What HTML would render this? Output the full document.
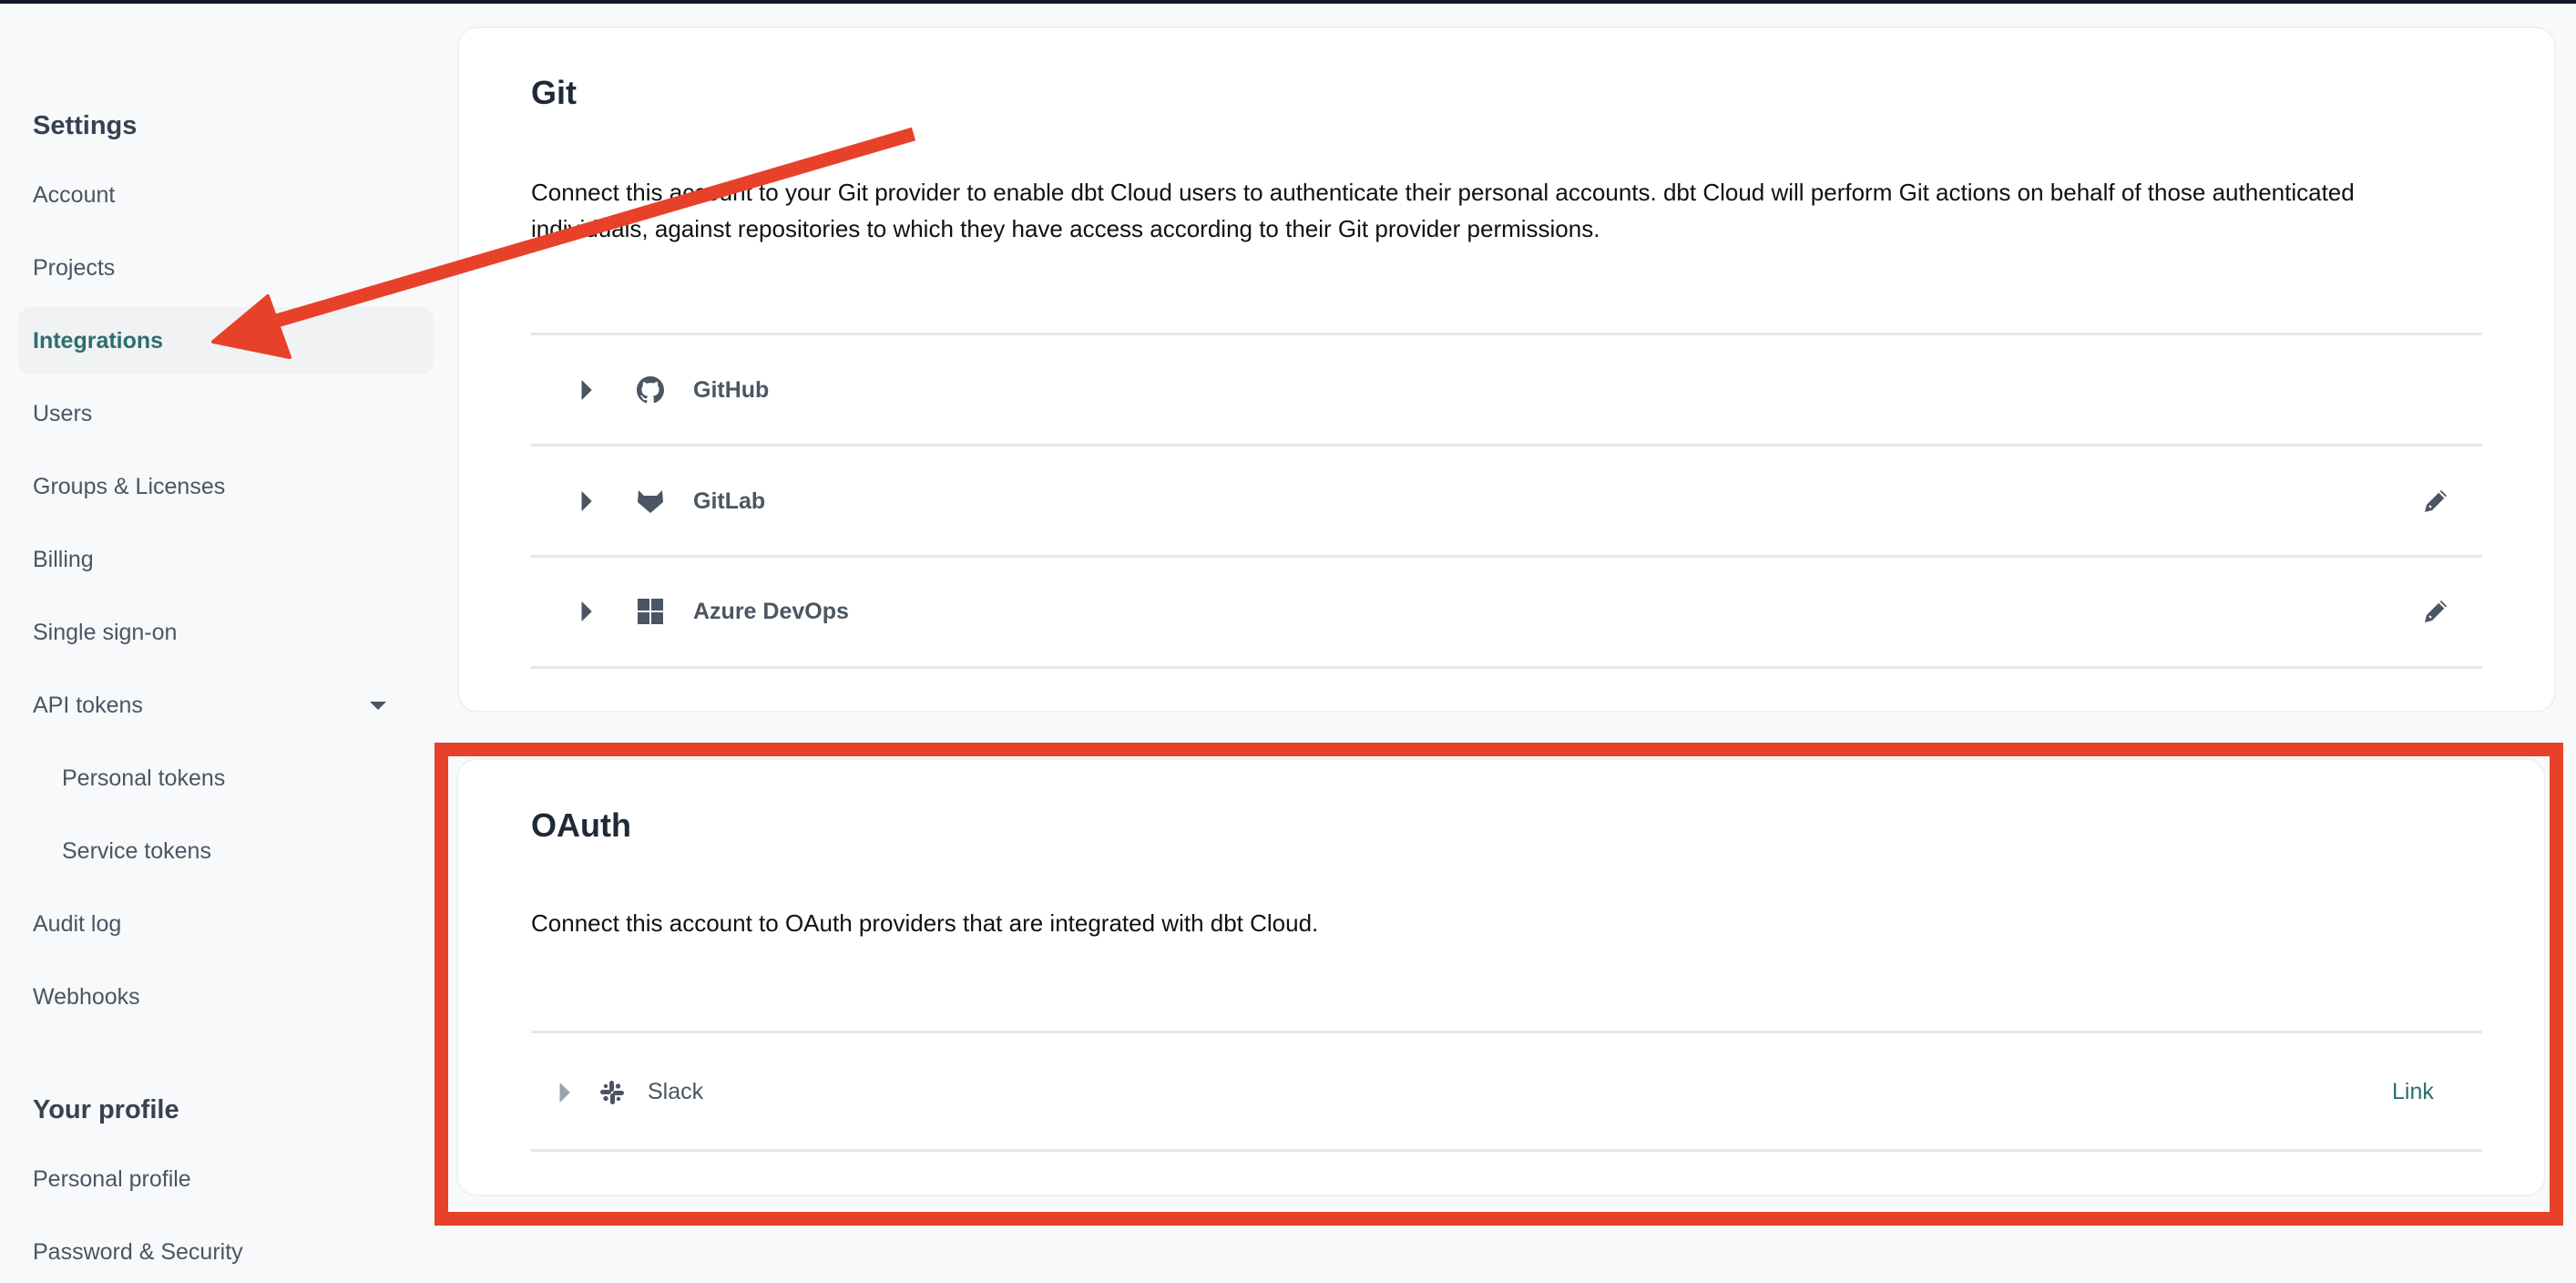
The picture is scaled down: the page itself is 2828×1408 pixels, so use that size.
<!DOCTYPE html>
<html><head><meta charset="utf-8"><style>
*{margin:0;padding:0;box-sizing:border-box}
body{width:2828px;height:1408px;background:#f8f9fb;font-family:"Liberation Sans",sans-serif;position:relative;overflow:hidden}
.t{position:absolute;white-space:nowrap;line-height:1}
.nav{left:36px;font-size:25px;color:#4b5563}
.h{font-weight:bold;color:#374151;font-size:29px}
.card{position:absolute;background:#fff;border:2px solid #eef0f3;border-radius:22px}
.div{position:absolute;left:583px;width:2142px;height:3px;background:#e6e7eb}
.lbl{font-size:25px;font-weight:bold;color:#4b5563}
</style></head><body>
<div style="position:absolute;left:0;top:0;width:2828px;height:4px;background:#111827"></div>

<div style="position:absolute;left:20px;top:337px;width:456px;height:74px;background:#f1f2f4;border-radius:14px"></div>
<div class="t h" style="left:36px;top:124px">Settings</div>
<div class="t nav" style="top:202px">Account</div>
<div class="t nav" style="top:282px">Projects</div>
<div class="t nav" style="top:362px;color:#2b6e70;font-weight:bold">Integrations</div>
<div class="t nav" style="top:442px">Users</div>
<div class="t nav" style="top:522px">Groups &amp; Licenses</div>
<div class="t nav" style="top:602px">Billing</div>
<div class="t nav" style="top:682px">Single sign-on</div>
<div class="t nav" style="top:762px">API tokens</div>
<svg style="position:absolute;left:406px;top:770px" width="18" height="10"><path d="M0 0H18L9 9Z" fill="#4b5563"/></svg>
<div class="t nav" style="left:68px;top:842px">Personal tokens</div>
<div class="t nav" style="left:68px;top:922px">Service tokens</div>
<div class="t nav" style="top:1002px">Audit log</div>
<div class="t nav" style="top:1082px">Webhooks</div>
<div class="t h" style="top:1204px;left:36px">Your profile</div>
<div class="t nav" style="top:1282px">Personal profile</div>
<div class="t nav" style="top:1362px">Password &amp; Security</div>

<div class="card" style="left:502px;top:29px;width:2304px;height:753px"></div>
<div class="t" style="left:583px;top:84px;font-size:36px;font-weight:bold;color:#1f2937">Git</div>
<div class="t" style="left:583px;top:198px;font-size:26px;color:#111">Connect this account to your Git provider to enable dbt Cloud users to authenticate their personal accounts. dbt Cloud will perform Git actions on behalf of those authenticated</div>
<div class="t" style="left:583px;top:238px;font-size:26px;color:#111">individuals, against repositories to which they have access according to their Git provider permissions.</div>
<div class="div" style="top:365px"></div>
<div class="div" style="top:487px"></div>
<div class="div" style="top:609px"></div>
<div class="div" style="top:731px"></div>

<svg style="position:absolute;left:638px;top:417px" width="12" height="22"><path d="M1 1L11 11L1 21Z" fill="#4b5563" stroke="#4b5563" stroke-linejoin="round"/></svg>
<svg style="position:absolute;left:699px;top:413px" width="30" height="30" viewBox="0 0 16 16"><path fill="#4b5563" d="M8 0C3.58 0 0 3.580 0 8c0 3.54 2.290 6.53 5.470 7.59.4.07.55-.17.55-.38v-1.33c-2.23.48-2.7-1.07-2.7-1.07-.36-.92-.89-1.17-.89-1.17-.73-.5.05-.49.05-.49.8.06 1.23.83 1.23.83.72 1.23 1.88.87 2.34.67.07-.52.28-.87.51-1.07-1.78-.2-3.64-.89-3.64-3.95 0-.87.31-1.59.82-2.150-.08-.2-.36-1.02.08-2.12 0 0 .67-.21 2.2.82A7.6 7.6 0 0 1 8 3.8c.68 0 1.36.09 2 .27 1.53-1.04 2.2-.82 2.2-.82.44 1.1.16 1.92.08 2.12.51.56.82 1.27.82 2.15 0 3.07-1.87 3.75-3.65 3.95.29.25.54.73.54 1.48v2.2c0 .21.15.46.55.38A8.01 8.01 0 0 0 16 8c0-4.42-3.58-8-8-8z"/></svg>
<div class="t lbl" style="left:761px;top:416px">GitHub</div>

<svg style="position:absolute;left:638px;top:539px" width="12" height="22"><path d="M1 1L11 11L1 21Z" fill="#4b5563" stroke="#4b5563" stroke-linejoin="round"/></svg>
<svg style="position:absolute;left:699px;top:535px" width="30" height="30" viewBox="0 0 30 30"><path fill="#4b5563" d="M2 3L8 9H22L28 3L29 16L15 28L1 16Z"/></svg>
<div class="t lbl" style="left:761px;top:538px">GitLab</div>
<svg style="position:absolute;left:2659px;top:535px" width="30" height="30" viewBox="0 0 30 30"><path fill="#4b5563" d="M21 3L27 9L11 25L3 27L5 19Z"/><path d="M19 5L25 11" stroke="#fff" stroke-width="2"/><path d="M8 20L10 22" stroke="#fff" stroke-width="2"/></svg>

<svg style="position:absolute;left:638px;top:660px" width="12" height="22"><path d="M1 1L11 11L1 21Z" fill="#4b5563" stroke="#4b5563" stroke-linejoin="round"/></svg>
<svg style="position:absolute;left:700px;top:657px" width="28" height="28"><rect x="0" y="0" width="13" height="13" fill="#4b5563"/><rect x="15" y="0" width="13" height="13" fill="#4b5563"/><rect x="0" y="15" width="13" height="13" fill="#4b5563"/><rect x="15" y="15" width="13" height="13" fill="#4b5563"/></svg>
<div class="t lbl" style="left:761px;top:659px">Azure DevOps</div>
<svg style="position:absolute;left:2659px;top:656px" width="30" height="30" viewBox="0 0 30 30"><path fill="#4b5563" d="M21 3L27 9L11 25L3 27L5 19Z"/><path d="M19 5L25 11" stroke="#fff" stroke-width="2"/><path d="M8 20L10 22" stroke="#fff" stroke-width="2"/></svg>

<div style="position:absolute;left:477px;top:815px;width:2337px;height:530px;border:15px solid #e8412a"></div>
<div class="card" style="left:501px;top:832px;width:2294px;height:481px;border-color:#f0f1f3"></div>
<div class="t" style="left:583px;top:888px;font-size:36px;font-weight:bold;color:#1f2937">OAuth</div>
<div class="t" style="left:583px;top:1000px;font-size:26px;color:#111">Connect this account to OAuth providers that are integrated with dbt Cloud.</div>
<div class="div" style="top:1131px"></div>
<div class="div" style="top:1261px"></div>
<svg style="position:absolute;left:614px;top:1188px" width="12" height="22"><path d="M1 1L11 11L1 21Z" fill="#9ca3af" stroke="#9ca3af" stroke-linejoin="round"/></svg>
<svg style="position:absolute;left:657px;top:1184px" width="30" height="30" viewBox="0 0 30 30" fill="#4b5563"><rect x="12" y="2" width="5" height="12" rx="2.5"/><rect x="2" y="12" width="12" height="5" rx="2.5"/><rect x="13" y="16" width="5" height="12" rx="2.5"/><rect x="16" y="13" width="12" height="5" rx="2.5"/><circle cx="21.5" cy="8" r="2.7"/><circle cx="8" cy="21.5" r="2.7"/><circle cx="8" cy="8" r="2.2"/><circle cx="22" cy="22" r="2.2"/></svg>
<div class="t" style="left:711px;top:1186px;font-size:25px;color:#4b5563">Slack</div>
<div class="t" style="left:2626px;top:1186px;font-size:25px;color:#2b6e70">Link</div>

<svg style="position:absolute;left:0;top:0" width="2828" height="1408"><path d="M1003 147L290 356" stroke="#e8412a" stroke-width="15"/><path d="M234 375L294 325L318 392Z" fill="#e8412a" stroke="#e8412a" stroke-width="4" stroke-linejoin="round"/></svg>
</body></html>
